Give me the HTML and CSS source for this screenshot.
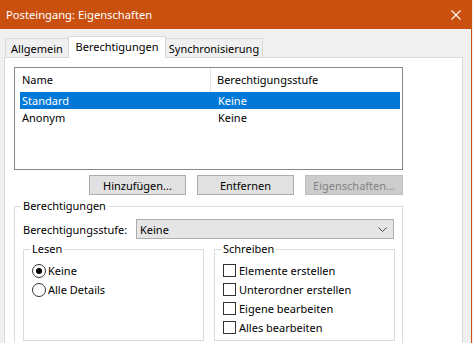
FILE: index.html
```html
<!DOCTYPE html>
<html lang="de">
<head>
<meta charset="UTF-8">
<title>Posteingang: Eigenschaften</title>
<link rel="stylesheet" href="styles.css">
</head>
<body>

<div class="window">
  <div class="titlebar">
    <span class="title">Posteingang: Eigenschaften</span>
    <svg class="close" width="10" height="10" viewBox="0 0 10 10">
      <path d="M0.5 0.5 L9.5 9.5 M9.5 0.5 L0.5 9.5" stroke="#fff" stroke-width="1.1" fill="none"/>
    </svg>
  </div>

  <div class="tabstrip">
    <div class="tab tab-a">Allgemein</div>
    <div class="tab tab-b active">Berechtigungen</div>
    <div class="tab tab-c">Synchronisierung</div>
  </div>

  <div class="panel">
    <div class="listbox">
      <div class="list-header">
        <div class="col-name">Name</div>
        <div class="col-level">Berechtigungsstufe</div>
      </div>
      <div class="list-row selected">
        <div class="cell-name">Standard</div>
        <div>Keine</div>
      </div>
      <div class="list-row">
        <div class="cell-name">Anonym</div>
        <div>Keine</div>
      </div>
    </div>

    <div class="buttons">
      <button class="btn">Hinzufügen...</button>
      <button class="btn">Entfernen</button>
      <button class="btn btn-wide" disabled>Eigenschaften...</button>
    </div>

    <fieldset class="group group-main">
      <legend>Berechtigungen</legend>
      <div class="level-row">
        <span class="level-label">Berechtigungsstufe:</span>
        <div class="combo">
          <span>Keine</span>
          <svg class="chevron" width="9" height="5" viewBox="0 0 9 5">
            <path d="M0.5 0.5 L4.5 4.5 L8.5 0.5" stroke="#444" stroke-width="1" fill="none"/>
          </svg>
        </div>
      </div>

      <div class="subgroups">
        <fieldset class="group sub">
          <legend>Lesen</legend>
          <div class="option"><span class="radio checked"></span>Keine</div>
          <div class="option"><span class="radio"></span>Alle Details</div>
        </fieldset>
        <fieldset class="group sub">
          <legend>Schreiben</legend>
          <div class="option"><span class="check"></span>Elemente erstellen</div>
          <div class="option"><span class="check"></span>Unterordner erstellen</div>
          <div class="option"><span class="check"></span>Eigene bearbeiten</div>
          <div class="option"><span class="check"></span>Alles bearbeiten</div>
        </fieldset>
      </div>
    </fieldset>
  </div>
</div>

</body>
</html>
```

FILE: styles.css
```css
html, body {
  margin: 0;
  padding: 0;
  height: 100%;
  overflow: hidden;
}
body {
  background-color: #f0f0f0;
  font-family: 'Noto Sans', 'Open Sans', sans-serif;
  font-size: 11px;
  color: #000;
}
.window {
  width: 471px;
  height: 343px;
  border-right: 1px solid #ca5010;
  background-color: #f0f0f0;
}
/* Title bar */
.titlebar {
  height: 29px;
  background-color: #ca5010;
  color: #fff;
  display: flex;
  align-items: center;
  padding-left: 6px;
  padding-right: 10px;
  font-size: 11.2px;
}
.title {
  flex: 1;
  padding-bottom: 1px;
}
.close {
  display: block;
}
/* Tabs */
.tabstrip {
  display: flex;
  align-items: flex-end;
  height: 22px;
  margin-top: 6px;
  padding-left: 5px;
}
.tab {
  height: 19px;
  line-height: 19px;
  box-sizing: border-box;
  border: 1px solid #d9d9d9;
  border-bottom: none;
  text-align: center;
  background-color: #f0f0f0;
}
.tab-a { width: 63px; border-right: none; }
.tab-b { width: 98px; }
.tab-c { width: 97px; border-left: none; }
.tab.active {
  height: 22px;
  line-height: 20px;
  background-color: #fff;
  position: relative;
  top: 1px;
}
/* Tab panel */
.panel {
  margin-left: 4px;
  width: 459px;
  height: 290px;
  box-sizing: border-box;
  border: 1px solid #d9d9d9;
  border-bottom: none;
  background-color: #fff;
  padding: 9px 0 0 9px;
}
/* Permission list */
.listbox {
  width: 389px;
  height: 103px;
  box-sizing: border-box;
  border: 1px solid #828790;
}
.list-header {
  display: grid;
  grid-template-columns: 196px 1fr;
  height: 24px;
  line-height: 24px;
}
.col-name {
  padding-left: 7px;
  border-right: 1px solid #e5e5e5;
}
.col-level {
  padding-left: 6px;
}
.list-row {
  display: grid;
  grid-template-columns: 198px 1fr;
  height: 17px;
  line-height: 17px;
  margin: 0 2px 0 5px;
}
.cell-name {
  padding-left: 2px;
}
.list-row.selected {
  background-color: #0078d7;
  color: #fff;
}
/* Buttons */
.buttons {
  display: flex;
  justify-content: flex-end;
  gap: 11px;
  width: 389px;
  margin-top: 5px;
}
.btn {
  width: 97px;
  height: 20px;
  box-sizing: border-box;
  padding: 0;
  font-family: inherit;
  font-size: 11px;
  color: #000;
  background-color: #e1e1e1;
  border: 1px solid #adadad;
  border-radius: 0;
}
.btn-wide {
  width: 98px;
}
.btn:disabled {
  background-color: #cccccc;
  border-color: #bfbfbf;
  color: #838383;
}
/* Group boxes */
.group {
  margin: 0;
  padding: 0;
  border: 1px solid #dcdcdc;
  box-sizing: border-box;
}
.group legend {
  padding: 0 2px;
  margin-left: -2px;
  line-height: 16px;
}
.group-main {
  width: 389px;
  height: 150px;
  margin-top: 3px;
  padding: 5px 0 0 8px;
  border-bottom: none;
}
.level-row {
  display: flex;
  align-items: center;
  height: 20px;
}
.level-label {
  width: 113px;
}
.combo {
  width: 258px;
  height: 20px;
  box-sizing: border-box;
  border: 1px solid #adadad;
  background-color: #e5e5e5;
  display: flex;
  align-items: center;
  justify-content: space-between;
  padding: 0 6px 0 3px;
}
.subgroups {
  display: flex;
  gap: 10px;
  margin-top: 2px;
}
.sub {
  width: 181px;
  height: 100px;
  padding: 4px 0 0 8px;
}
.option {
  display: flex;
  align-items: center;
  height: 19px;
}
.radio {
  width: 14px;
  height: 14px;
  box-sizing: border-box;
  border: 1px solid #333;
  border-radius: 50%;
  margin-right: 2px;
  display: flex;
  align-items: center;
  justify-content: center;
}
.radio.checked::after {
  content: '';
  width: 6px;
  height: 6px;
  border-radius: 50%;
  background-color: #000;
}
.check {
  width: 13px;
  height: 13px;
  box-sizing: border-box;
  border: 1px solid #333;
  margin-right: 3px;
}
```
